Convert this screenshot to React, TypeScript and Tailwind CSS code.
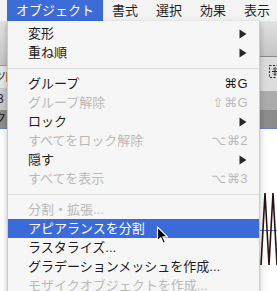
import React from "react";

type Item =
  | { sep: true }
  | {
      sep?: false;
      label: string;
      sc?: string;
      arrow?: boolean;
      disabled?: boolean;
      hi?: boolean;
    };

const items: Item[] = [
  { label: "変形", arrow: true },
  { label: "重ね順", arrow: true },
  { sep: true },
  { label: "グループ", sc: "⌘G" },
  { label: "グループ解除", sc: "⇧⌘G", disabled: true },
  { label: "ロック", arrow: true },
  { label: "すべてをロック解除", sc: "⌥⌘2", disabled: true },
  { label: "隠す", arrow: true },
  { label: "すべてを表示", sc: "⌥⌘3", disabled: true },
  { sep: true },
  { label: "分割・拡張...", disabled: true },
  { label: "アピアランスを分割", hi: true },
  { label: "ラスタライズ..." },
  { label: "グラデーションメッシュを作成..." },
  { label: "モザイクオブジェクトを作成...", disabled: true },
];

function Arrow() {
  return (
    <svg width="8" height="10" viewBox="0 0 8 10" className="mr-[1px]">
      <polygon points="0.5,0.5 7.5,5 0.5,9.5" fill="#262626" />
    </svg>
  );
}

function Menu() {
  return (
    <div className="absolute top-[21px] left-[7px] w-[253px] h-[280px] bg-[#f6f6f6] border-x border-[#cbcbcb] shadow-[0_2px_6px_rgba(0,0,0,0.25)] pt-[3px] flex flex-col">
      {items.map((it, i) =>
        it.sep ? (
          <div key={i} className="h-[12px] flex items-center">
            <div className="h-px w-full bg-[#dcdcdc]" />
          </div>
        ) : (
          <div
            key={i}
            className={
              it.hi
                ? "h-[19px] shrink-0 flex items-center justify-between pl-[20px] pr-[11px] bg-[#3c6bd9] text-white"
                : it.disabled
                ? "h-[19px] shrink-0 flex items-center justify-between pl-[20px] pr-[11px] text-[#b9b9b9]"
                : "h-[19px] shrink-0 flex items-center justify-between pl-[20px] pr-[11px] text-[#1c1c1c]"
            }
          >
            <span className="leading-[19px] whitespace-nowrap">{it.label}</span>
            {it.sc ? (
              <span className="leading-[19px] font-['Liberation_Sans','DejaVu_Sans',sans-serif] tracking-[0.5px]">
                {it.sc}
              </span>
            ) : null}
            {it.arrow ? <Arrow /> : null}
          </div>
        )
      )}
    </div>
  );
}

function Cursor() {
  return (
    <svg
      width="13"
      height="19"
      viewBox="0 0 13 19"
      className="absolute left-[156px] top-[226px]"
    >
      <path
        d="M1.5 1 L1.5 15 L4.8 11.8 L7.2 17.3 L9.4 16.3 L7 10.9 L11.5 10.9 Z"
        fill="#000"
        stroke="#fff"
        strokeWidth="1.2"
        strokeLinejoin="round"
      />
    </svg>
  );
}

export default function App() {
  const bar = ["書式", "選択", "効果", "表示"];
  return (
    <div className="relative w-[277px] h-[291px] overflow-hidden bg-white text-[13px] font-['Liberation_Sans','Noto_Sans_CJK_JP',sans-serif]">
      {/* menu bar */}
      <div className="flex h-[21px] bg-[#f3f3f3] pl-[7px] text-[#1f1f1f] leading-[21px] whitespace-nowrap">
        <div className="px-[9px] bg-[#3d6bd8] text-white">オブジェクト</div>
        {bar.map((b) => (
          <div key={b} className="px-[9px]">
            {b}
          </div>
        ))}
      </div>

      {/* app body behind the menu */}
      <div className="flex h-[270px]">
        {/* left strip */}
        <div className="w-[7px] flex flex-col overflow-hidden text-[12px]">
          <div className="h-[44px] shrink-0 bg-gradient-to-b from-[#e2e2e2] to-[#c4c4c4]" />
          <div className="h-px shrink-0 bg-[#9a9a9a]" />
          <div className="h-[22px] shrink-0 bg-[#e4e4e4] flex items-center">
            <span className="ml-[-6px] text-[#333] leading-none">ツ</span>
            <div className="w-px h-[10px] bg-[#c77a2c]" />
          </div>
          <div className="h-[22px] shrink-0 bg-[#c8c8c8] flex items-center">
            <span className="ml-[-3px] text-[#222] leading-none">3</span>
          </div>
          <div className="h-[18px] shrink-0 bg-[#8e8e8e] flex items-center">
            <span className="ml-[-6px] text-[#111] leading-none">ク</span>
          </div>
          <div className="h-px shrink-0 bg-[#6a7ed8]" />
          <div className="flex-1 bg-white" />
        </div>

        {/* middle (covered by menu) */}
        <div className="flex-1 flex flex-col">
          <div className="h-[35px] shrink-0 bg-gradient-to-b from-[#e2e2e2] to-[#c4c4c4]" />
          <div className="h-px shrink-0 bg-[#8a8a8a]" />
          <div className="h-[34px] shrink-0 bg-[#dcdcdc]" />
          <div className="h-[19px] shrink-0 bg-[#acacac]" />
          <div className="h-[18px] shrink-0 bg-[#8b8b8b]" />
          <div className="h-px shrink-0 bg-[#6a7ed8]" />
          <div className="flex-1 bg-white" />
        </div>

        {/* right strip */}
        <div className="w-[17px] flex flex-col">
          <div className="h-[35px] shrink-0 bg-gradient-to-b from-[#e2e2e2] to-[#c4c4c4]" />
          <div className="h-px shrink-0 bg-[#8a8a8a]" />
          <div className="h-[34px] shrink-0 bg-[#dcdcdc] pl-[9px] pt-[8px]">
            <svg width="12" height="13" viewBox="0 0 12 13">
              <rect
                x="0.5"
                y="0.5"
                width="11"
                height="12"
                fill="none"
                stroke="#222"
                strokeWidth="1"
                strokeDasharray="2 1.5"
              />
              <path d="M6 3 L6 10 M3 6.5 L9 6.5" stroke="#222" strokeWidth="1" />
              <path d="M4 4.5 L6 2.5 L8 4.5 M4 8.5 L6 10.5 L8 8.5" fill="none" stroke="#222" strokeWidth="0.8" />
            </svg>
          </div>
          <div className="h-[19px] shrink-0 bg-[#acacac]" />
          <div className="h-[18px] shrink-0 bg-[#8b8b8b]" />
          <div className="h-px shrink-0 bg-[#6a7ed8]" />
          <div className="flex-1 bg-white">
            <svg width="17" height="162" viewBox="0 0 17 162">
              <line x1="0" y1="101.5" x2="17" y2="101.5" stroke="#5b7fe0" strokeWidth="1" />
              <polyline
                points="1,136 5,64 9,136 13,64 17,136"
                fill="none"
                stroke="#2a1212"
                strokeWidth="1.6"
                strokeLinejoin="miter"
              />
            </svg>
          </div>
        </div>
      </div>

      <Menu />
      <Cursor />
    </div>
  );
}
